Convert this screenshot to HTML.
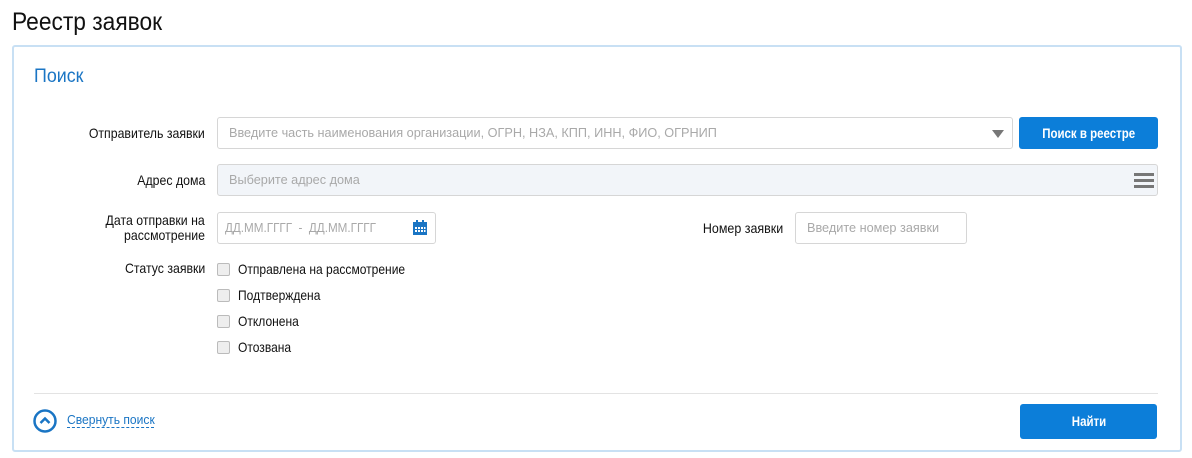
<!DOCTYPE html>
<html><head><meta charset="utf-8"><style>
*{box-sizing:border-box;margin:0;padding:0}
body{width:1192px;height:458px;background:#fff;font-family:"Liberation Sans",sans-serif;color:#111;position:relative;overflow:hidden}
.a{position:absolute}
.s{display:inline-block;white-space:nowrap;transform-origin:left center}
.r{transform-origin:right center}
.c{transform-origin:center center}
h1{position:absolute;left:12px;top:8px;font-size:25px;font-weight:normal;color:#111;white-space:nowrap;transform:scaleX(.91);transform-origin:left}
.panel{left:12px;top:45px;width:1170px;height:407px;border:2px solid #c8e0f4;border-radius:3px}
.lbl{font-size:14px;text-align:right;width:200px;left:5px;line-height:15px}
.lbl .s{transform:scaleX(.88)}
.inp{border:1px solid #d6d6d6;border-radius:3px;font-size:12.7px;color:#a9a9a9;padding-left:11px;line-height:30px;white-space:nowrap;overflow:hidden}
.btn{background:#0c7ed9;color:#fff;border-radius:3px;font-size:14px;font-weight:bold;text-align:center;line-height:32px}
.btn .s{transform:scaleX(.82);transform-origin:center}
.cb{width:13px;height:13px;border:1px solid #bbb;border-radius:2px;background:#eee;left:217px}
.ct{left:238px;font-size:14px}
.ct .s{transform:scaleX(.86)}
</style></head><body>
<h1>Реестр заявок</h1>
<div class="a panel"></div>
<div class="a" style="left:34px;top:66px;font-size:19px;color:#1a75c4"><span class="s" style="transform:scaleX(.94)">Поиск</span></div>

<div class="a lbl" style="top:126px"><span class="s r">Отправитель заявки</span></div>
<div class="a inp" style="left:217px;top:117px;width:796px;height:32px">Введите часть наименования организации, ОГРН, НЗА, КПП, ИНН, ФИО, ОГРНИП</div>
<div class="a" style="left:992px;top:130px;width:0;height:0;border-left:6px solid transparent;border-right:6px solid transparent;border-top:8px solid #777"></div>
<div class="a btn" style="left:1019px;top:117px;width:139px;height:32px"><span class="s">Поиск в реестре</span></div>

<div class="a lbl" style="top:173px"><span class="s r">Адрес дома</span></div>
<div class="a inp" style="left:217px;top:164px;width:941px;height:32px;background:#f2f5f9">Выберите адрес дома</div>
<div class="a" style="left:1134px;top:173px;width:20px;height:3px;background:#777;box-shadow:0 6px 0 #777,0 12px 0 #777"></div>

<div class="a lbl" style="top:213px"><span class="s r">Дата отправки на</span><br><span class="s r">рассмотрение</span></div>
<div class="a inp" style="left:217px;top:212px;width:219px;height:32px;padding-left:7px"><span class="s" style="transform:scaleX(.92)">ДД.ММ.ГГГГ &nbsp;-&nbsp; ДД.ММ.ГГГГ</span></div>
<svg class="a" style="left:412px;top:220px" width="16" height="16" viewBox="0 0 16 16"><rect x="1" y="2" width="14" height="13" fill="#1a75c4"/><rect x="4" y="0" width="2" height="4" fill="#1a75c4"/><rect x="10" y="0" width="2" height="4" fill="#1a75c4"/><g fill="#fff"><rect x="3" y="7" width="2" height="2"/><rect x="6" y="7" width="2" height="2"/><rect x="9" y="7" width="2" height="2"/><rect x="12" y="7" width="1.5" height="2"/><rect x="3" y="10" width="2" height="2"/><rect x="6" y="10" width="2" height="2"/><rect x="9" y="10" width="2" height="2"/><rect x="12" y="10" width="1.5" height="2"/></g></svg>

<div class="a" style="left:583px;width:200px;text-align:right;top:220px;font-size:14px"><span class="s r" style="transform:scaleX(.89)">Номер заявки</span></div>
<div class="a inp" style="left:795px;top:212px;width:172px;height:32px">Введите номер заявки</div>

<div class="a lbl" style="top:261px"><span class="s r">Статус заявки</span></div>
<div class="a cb" style="top:263px"></div><div class="a ct" style="top:261px"><span class="s">Отправлена на рассмотрение</span></div>
<div class="a cb" style="top:289px"></div><div class="a ct" style="top:287px"><span class="s">Подтверждена</span></div>
<div class="a cb" style="top:315px"></div><div class="a ct" style="top:313px"><span class="s">Отклонена</span></div>
<div class="a cb" style="top:341px"></div><div class="a ct" style="top:339px"><span class="s">Отозвана</span></div>

<div class="a" style="left:34px;top:393px;width:1124px;height:1px;background:#e3e3e3"></div>
<svg class="a" style="left:33px;top:409px" width="24" height="24" viewBox="0 0 24 24"><circle cx="12" cy="12" r="10.5" fill="none" stroke="#1a75c4" stroke-width="2.5"/><path d="M7.5 14 L12 9.5 L16.5 14" fill="none" stroke="#1a75c4" stroke-width="2.5"/></svg>
<div class="a" style="left:67px;top:412px;font-size:13px;color:#1a75c4;border-bottom:1px dashed #1a75c4;line-height:15px;width:87px;white-space:nowrap"><span class="s" style="transform:scaleX(.93)">Свернуть поиск</span></div>
<div class="a btn" style="left:1020px;top:404px;width:137px;height:35px;line-height:35px"><span class="s">Найти</span></div>
</body></html>
